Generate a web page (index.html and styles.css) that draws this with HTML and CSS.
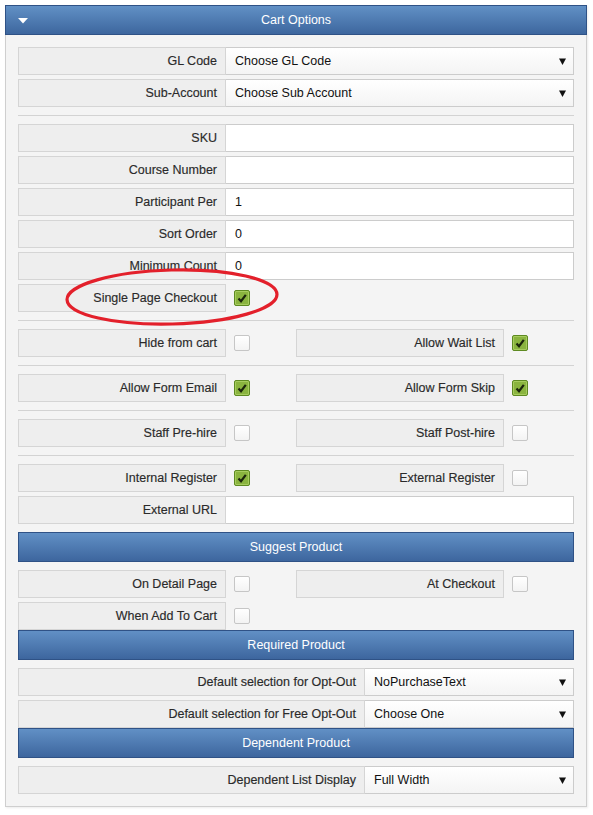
FILE: index.html
```html
<!DOCTYPE html>
<html>
<head>
<meta charset="utf-8">
<link rel="stylesheet" href="styles.css">
</head>
<body>
<div class="panel">
  <div class="panel-head">
    <svg class="caret" width="10" height="6" viewBox="0 0 10 6"><polygon points="0,0 10,0 5,5.5" fill="#fff"/></svg>
    <span>Cart Options</span>
  </div>
  <div class="panel-body">
    <div class="row"><div class="lbl">GL Code</div><div class="sel"><span>Choose GL Code</span><svg class="arr" width="7" height="7" viewBox="0 0 7 7"><polygon points="0,0.5 7,0.5 3.5,7" fill="#111"/></svg></div></div>
    <div class="row"><div class="lbl">Sub-Account</div><div class="sel"><span>Choose Sub Account</span><svg class="arr" width="7" height="7" viewBox="0 0 7 7"><polygon points="0,0.5 7,0.5 3.5,7" fill="#111"/></svg></div></div>
    <div class="sep"></div>
    <div class="row"><div class="lbl">SKU</div><div class="inp"></div></div>
    <div class="row"><div class="lbl">Course Number</div><div class="inp"></div></div>
    <div class="row"><div class="lbl">Participant Per</div><div class="inp">1</div></div>
    <div class="row"><div class="lbl">Sort Order</div><div class="inp">0</div></div>
    <div class="row"><div class="lbl">Minimum Count</div><div class="inp">0</div></div>
    <div class="row last"><div class="lbl">Single Page Checkout</div><div class="cbcell"><span class="cb on"><svg width="12" height="12" viewBox="0 0 12 12"><path d="M2.5 6.5 L5 9.2 L9.8 2.8" fill="none" stroke="#1c260c" stroke-width="2.2"/></svg></span></div></div>
    <div class="sep"></div>
    <div class="pair">
      <div class="half"><div class="lbl">Hide from cart</div><div class="cbcell"><span class="cb"></span></div></div>
      <div class="half"><div class="lbl">Allow Wait List</div><div class="cbcell"><span class="cb on"><svg width="12" height="12" viewBox="0 0 12 12"><path d="M2.5 6.5 L5 9.2 L9.8 2.8" fill="none" stroke="#1c260c" stroke-width="2.2"/></svg></span></div></div>
    </div>
    <div class="sep"></div>
    <div class="pair">
      <div class="half"><div class="lbl">Allow Form Email</div><div class="cbcell"><span class="cb on"><svg width="12" height="12" viewBox="0 0 12 12"><path d="M2.5 6.5 L5 9.2 L9.8 2.8" fill="none" stroke="#1c260c" stroke-width="2.2"/></svg></span></div></div>
      <div class="half"><div class="lbl">Allow Form Skip</div><div class="cbcell"><span class="cb on"><svg width="12" height="12" viewBox="0 0 12 12"><path d="M2.5 6.5 L5 9.2 L9.8 2.8" fill="none" stroke="#1c260c" stroke-width="2.2"/></svg></span></div></div>
    </div>
    <div class="sep"></div>
    <div class="pair">
      <div class="half"><div class="lbl">Staff Pre-hire</div><div class="cbcell"><span class="cb"></span></div></div>
      <div class="half"><div class="lbl">Staff Post-hire</div><div class="cbcell"><span class="cb"></span></div></div>
    </div>
    <div class="sep"></div>
    <div class="pair">
      <div class="half"><div class="lbl">Internal Register</div><div class="cbcell"><span class="cb on"><svg width="12" height="12" viewBox="0 0 12 12"><path d="M2.5 6.5 L5 9.2 L9.8 2.8" fill="none" stroke="#1c260c" stroke-width="2.2"/></svg></span></div></div>
      <div class="half"><div class="lbl">External Register</div><div class="cbcell"><span class="cb"></span></div></div>
    </div>
    <div class="row"><div class="lbl">External URL</div><div class="inp"></div></div>

    <div class="sub sub-first">Suggest Product</div>
    <div class="pair">
      <div class="half"><div class="lbl">On Detail Page</div><div class="cbcell"><span class="cb"></span></div></div>
      <div class="half"><div class="lbl">At Checkout</div><div class="cbcell"><span class="cb"></span></div></div>
    </div>
    <div class="pair flush">
      <div class="half"><div class="lbl">When Add To Cart</div><div class="cbcell"><span class="cb"></span></div></div>
    </div>

    <div class="sub">Required Product</div>
    <div class="row"><div class="lbl wide">Default selection for Opt-Out</div><div class="sel"><span>NoPurchaseText</span><svg class="arr" width="7" height="7" viewBox="0 0 7 7"><polygon points="0,0.5 7,0.5 3.5,7" fill="#111"/></svg></div></div>
    <div class="row flush"><div class="lbl wide">Default selection for Free Opt-Out</div><div class="sel"><span>Choose One</span><svg class="arr" width="7" height="7" viewBox="0 0 7 7"><polygon points="0,0.5 7,0.5 3.5,7" fill="#111"/></svg></div></div>

    <div class="sub">Dependent Product</div>
    <div class="row flush"><div class="lbl wide">Dependent List Display</div><div class="sel"><span>Full Width</span><svg class="arr" width="7" height="7" viewBox="0 0 7 7"><polygon points="0,0.5 7,0.5 3.5,7" fill="#111"/></svg></div></div>
  </div>
  <svg class="mark" width="230" height="70" viewBox="0 0 230 70"><ellipse cx="115" cy="35" rx="105" ry="27" fill="none" stroke="#e3202b" stroke-width="3.2" transform="rotate(-1.5 115 35)"/></svg>
</div>
</body>
</html>
```

FILE: styles.css
```css
html, body { margin: 0; padding: 0; background: #fff; }
body { padding: 5px; font-family: "Liberation Sans", Arial, sans-serif; font-size: 12.5px; color: #333; }

.panel {
  position: relative;
  width: 582px;
  box-sizing: border-box;
  border: 1px solid #cfcfcf;
  background: #f4f4f4;
  box-shadow: 1px 1px 2px rgba(0,0,0,0.08);
}
.panel-head {
  position: relative;
  height: 30px;
  box-sizing: border-box;
  margin: -1px -1px 0 -1px;
  border: 1px solid #2f5286;
  background: linear-gradient(#6190c5, #3d669e);
  color: #fff;
  display: flex;
  align-items: center;
  justify-content: center;
}
.caret { position: absolute; left: 12px; top: 12px; }

.panel-body { padding: 12px; }

.row { display: flex; height: 28px; margin-bottom: 4px; }
.row.last, .row.flush, .pair.flush { margin-bottom: 0; }

.lbl {
  width: 208px;
  flex: none;
  box-sizing: border-box;
  height: 28px;
  border: 1px solid #d5d5d5;
  background: #eeeeee;
  display: flex;
  align-items: center;
  justify-content: flex-end;
  padding-right: 8px;
  color: #2a2a2a;
  -webkit-text-stroke: 0.15px #2a2a2a;
}
.lbl.wide { width: 347px; }

.inp, .sel {
  flex: 1;
  box-sizing: border-box;
  height: 28px;
  border: 1px solid #cccccc;
  border-left: none;
  background: #fff;
  display: flex;
  align-items: center;
  padding: 0 9px;
  color: #111;
}
.sel { background: linear-gradient(#ffffff, #f4f4f4); justify-content: space-between; padding-right: 7px; }
.arr { display: block; }

.cbcell { display: flex; align-items: center; padding-left: 8px; }
.cb {
  width: 16px; height: 16px;
  box-sizing: border-box;
  border: 1px solid #c6c6c6;
  border-radius: 2px;
  background: linear-gradient(#ffffff, #f3f3f3);
  display: flex; align-items: center; justify-content: center;
}
.cb.on { background: #8ab43f; border-color: #5e8a22; box-shadow: inset 0 0 0 1px #a7cc5e; }

.sep { height: 1px; background: #d3d3d3; margin: 8px 0; }

.pair { display: grid; grid-template-columns: 278px 278px; height: 28px; margin-bottom: 4px; }
.half { display: flex; }

.sub {
  height: 30px;
  box-sizing: border-box;
  border: 1px solid #2f5286;
  background: linear-gradient(#6190c5, #3d669e);
  color: #fff;
  display: flex;
  align-items: center;
  justify-content: center;
  margin-bottom: 8px;
}
.sub-first { margin-top: 8px; }

.mark { position: absolute; left: 51px; top: 256px; }
```
